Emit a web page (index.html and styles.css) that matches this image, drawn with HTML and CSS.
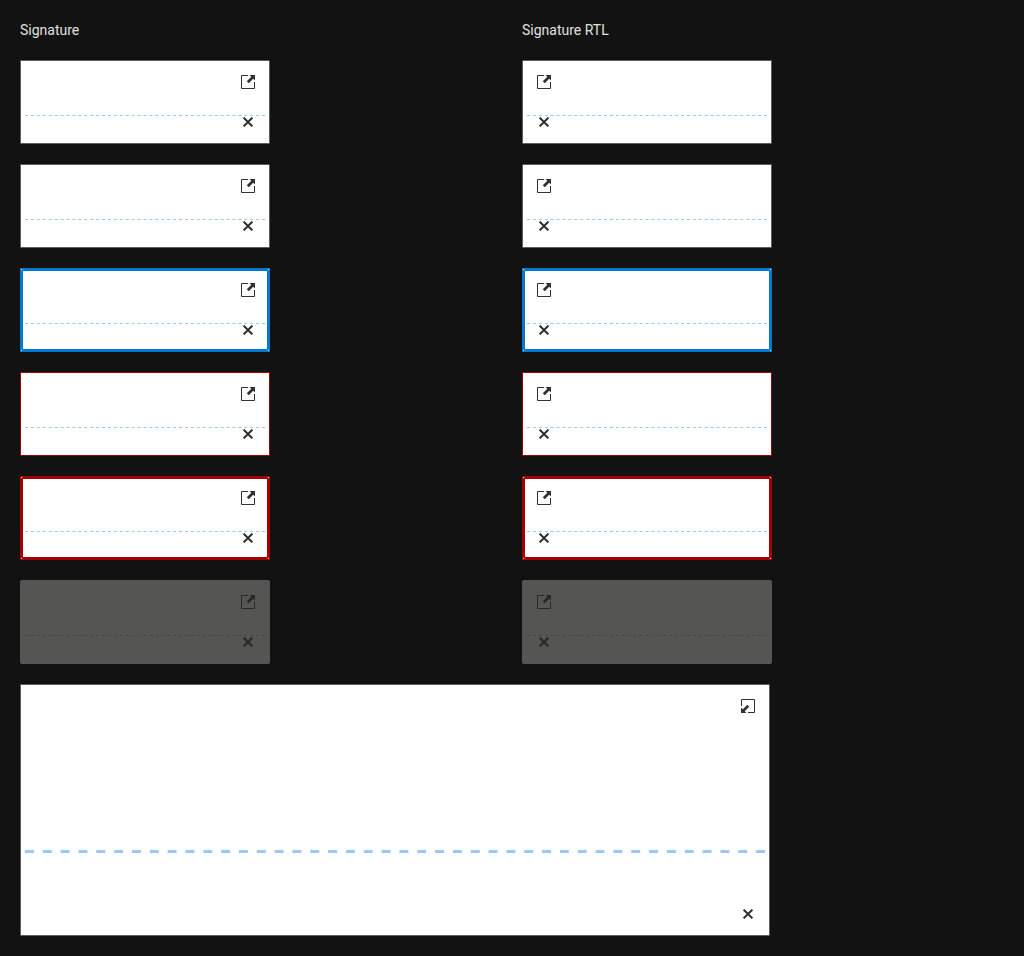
FILE: index.html
```
<!DOCTYPE html>
<html lang="en">
<head>
<meta charset="utf-8">
<meta name="viewport" content="width=device-width, initial-scale=1">
<title>Signature</title>
<link rel="stylesheet" href="styles.css">
</head>
<body>
<svg class="defs" aria-hidden="true">
  <symbol id="maximize" viewBox="0 0 14 14"><path d="M7 .5H.5v13h13V7" fill="none" stroke="currentColor"/><path d="M8.500 0H14v5.500l-1.800-1.800L7.700 8.200 5.800 6.300 10.300 1.800z" fill="currentColor"/></symbol>
  <symbol id="minimize" viewBox="0 0 14 14"><path d="M.5 7V.5h13v13H7" fill="none" stroke="currentColor"/><path d="M5.500 14H0V8.500l1.800 1.800L6.300 5.800 8.200 7.700 3.700 12.200z" fill="currentColor"/></symbol>
  <symbol id="close" viewBox="0 0 10 10"><path d="M.6.6l8.800 8.800M9.400.6L.6 9.400" fill="none" stroke="currentColor" stroke-width="2"/></symbol>
</svg>
<main class="grid" id="grid"></main>
<script src="script.js"></script>
</body>
</html>
```
FILE: script.js
```
const grid = document.getElementById('grid');

function signature(state, dir, large) {
  const dashes = large ? 83 : 81;
  const icon = large ? 'minimize' : 'maximize';
  const off = state === 'disabled' ? 'disabled' : '';
  return `<div class="signature ${state} ${large ? 'large' : ''}" dir="${dir}">
    <svg class="line" aria-hidden="true"><line x1="0" y1="50%" x2="100%" y2="50%" pathLength="${dashes}"/></svg>
    <button class="action" type="button" aria-label="${large ? 'Minimize' : 'Maximize'}" ${off}><svg class="icon"><use href="#${icon}"/></svg></button>
    <button class="action" type="button" aria-label="Clear" ${off}><svg class="icon clear"><use href="#close"/></svg></button>
  </div>`;
}

const states = ['normal', 'hover', 'focus', 'invalid', 'invalid focus', 'disabled'];
let html = '<h1 class="title">Signature</h1><h1 class="title">Signature RTL</h1>';
for (const state of states) {
  html += signature(state, 'ltr', false) + signature(state, 'rtl', false);
}
grid.innerHTML = html + signature('normal', 'ltr', true);
```
FILE: styles.css
```
* {
  box-sizing: border-box;
}

body {
  margin: 0;
  background: #121212;
  color: #e0e0e0;
  font: 14px/20px Roboto, sans-serif;
}

.defs {
  display: none;
}

.grid {
  display: grid;
  grid-template-columns: 1fr 1fr;
  gap: 20px;
  padding: 20px;
}

.title {
  margin: 0;
  font-size: 14px;
  font-weight: 400;
}

.signature {
  position: relative;
  display: flex;
  flex-direction: column;
  justify-content: space-between;
  align-items: flex-end;
  width: 250px;
  height: 84px;
  padding: 5px;
  border: 1px solid #605e5c;
  border-radius: 1px;
  background: #fff;
  color: #323130;
}

.large {
  grid-column: 1 / -1;
  width: 750px;
  max-width: 100%;
  height: 252px;
}

.focus {
  border-color: #0078d4;
}

.invalid {
  border-color: #a80000;
}

.focus::after {
  content: "";
  position: absolute;
  inset: 0;
  border: 2px solid #0078d4;
  border-radius: 2px;
  pointer-events: none;
}

.invalid.focus::after {
  border-color: #a80000;
}

.disabled {
  border-color: #555553;
  border-radius: 2px;
  background: #555553;
  color: #292827;
}

.line {
  position: absolute;
  left: 4px;
  right: 4px;
  top: 66%;
  width: calc(100% - 8px);
  height: 1px;
  stroke: #99c8ff;
  stroke-width: 1px;
}

.line line {
  stroke-dasharray: 1 1;
}

.large .line {
  height: 3px;
  stroke-width: 3px;
}

.disabled .line {
  stroke: #454543;
}

.action {
  position: relative;
  display: flex;
  align-items: center;
  justify-content: center;
  width: 32px;
  height: 32px;
  padding: 0;
  border: 0;
  background: none;
  color: inherit;
}

.icon {
  width: 14px;
  height: 14px;
}

.clear {
  width: 10px;
  height: 10px;
}
```
